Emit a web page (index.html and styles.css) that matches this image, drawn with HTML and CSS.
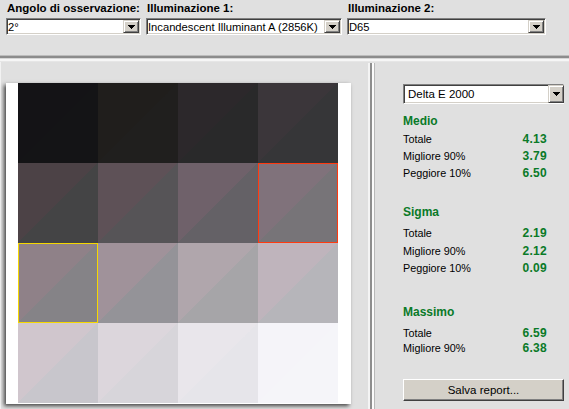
FILE: index.html
```html
<!DOCTYPE html>
<html>
  <head>
    <meta charset="utf-8" />
    <meta name="viewport" content="width=device-width, initial-scale=1" />
    <link rel="stylesheet" href="styles.css">
  </head>
  <body>
    <div class="top-bar">
      <div class="field field-angle">
        <label>Angolo di osservazione:</label>
        <div class="combo">
          <span>2°</span>
          <i class="combo-btn"><svg width="7" height="4" viewBox="0 0 7 4"><path d="M0 0h7v1H0zM1 1h5v1H1zM2 2h3v1H2zM3 3h1v1H3z"/></svg></i>
        </div>
      </div>
      <div class="field field-ill1">
        <label>Illuminazione 1:</label>
        <div class="combo">
          <span>Incandescent Illuminant A (2856K)</span>
          <i class="combo-btn"><svg width="7" height="4" viewBox="0 0 7 4"><path d="M0 0h7v1H0zM1 1h5v1H1zM2 2h3v1H2zM3 3h1v1H3z"/></svg></i>
        </div>
      </div>
      <div class="field field-ill2">
        <label>Illuminazione 2:</label>
        <div class="combo">
          <span>D65</span>
          <i class="combo-btn"><svg width="7" height="4" viewBox="0 0 7 4"><path d="M0 0h7v1H0zM1 1h5v1H1zM2 2h3v1H2zM3 3h1v1H3z"/></svg></i>
        </div>
      </div>
    </div>

    <div class="h-split"></div>

    <main>
      <div class="preview">
        <div class="paper">
          <div class="patches">
            <div class="patch" style="--a:#141316;--b:#141416"></div>
            <div class="patch" style="--a:#201e1c;--b:#201f1e"></div>
            <div class="patch" style="--a:#2c282b;--b:#29292a"></div>
            <div class="patch" style="--a:#3b363a;--b:#363638"></div>

            <div class="patch" style="--a:#4c4246;--b:#444445"></div>
            <div class="patch" style="--a:#5e5157;--b:#565457"></div>
            <div class="patch" style="--a:#6f616a;--b:#646166"></div>
            <div class="patch patch-worst" style="--a:#80727b;--b:#777478"></div>

            <div class="patch patch-best" style="--a:#8f8188;--b:#858387"></div>
            <div class="patch" style="--a:#a0929a;--b:#949398"></div>
            <div class="patch" style="--a:#b0a6ac;--b:#a6a5a8"></div>
            <div class="patch" style="--a:#bfb4bc;--b:#b6b5ba"></div>

            <div class="patch" style="--a:#d0c6cd;--b:#c8c6cc"></div>
            <div class="patch" style="--a:#dcd6dc;--b:#d7d5da"></div>
            <div class="patch" style="--a:#e9e6eb;--b:#e6e5ea"></div>
            <div class="patch" style="--a:#f5f4f9;--b:#f5f5f9"></div>
          </div>
        </div>
      </div>

      <div class="v-split"></div>

      <aside class="stats">
        <div class="combo combo-metric">
          <span>Delta E 2000</span>
          <i class="combo-btn"><svg width="7" height="4" viewBox="0 0 7 4"><path d="M0 0h7v1H0zM1 1h5v1H1zM2 2h3v1H2zM3 3h1v1H3z"/></svg></i>
        </div>

        <section class="group group-medio">
          <h3>Medio</h3>
          <div class="row"><span>Totale</span><b>4.13</b></div>
          <div class="row"><span>Migliore 90%</span><b>3.79</b></div>
          <div class="row"><span>Peggiore 10%</span><b>6.50</b></div>
        </section>

        <section class="group group-sigma">
          <h3>Sigma</h3>
          <div class="row"><span>Totale</span><b>2.19</b></div>
          <div class="row"><span>Migliore 90%</span><b>2.12</b></div>
          <div class="row"><span>Peggiore 10%</span><b>0.09</b></div>
        </section>

        <section class="group group-max">
          <h3>Massimo</h3>
          <div class="row"><span>Totale</span><b>6.59</b></div>
          <div class="row"><span>Migliore 90%</span><b>6.38</b></div>
        </section>

        <button class="save">Salva report...</button>
      </aside>
    </main>
  </body>
</html>
```

FILE: styles.css
```css
* {
  box-sizing: border-box;
}

body {
  margin: 0;
  width: 569px;
  height: 409px;
  overflow: hidden;
  background: #e0e0e0;
  font-family: "Liberation Sans", Arial, sans-serif;
  font-size: 11px;
  color: #000;
}

/* top options bar */

.top-bar {
  display: flex;
  gap: 5px;
  height: 55px;
  padding: 1px 0 0 6px;
}

.field label {
  display: block;
  font-weight: bold;
  font-size: 11.5px;
  white-space: nowrap;
  line-height: 14px;
  padding-left: 1px;
  margin-bottom: 3px;
}

.field-angle {
  width: 135px;
}

.field-ill1 {
  width: 196px;
}

.field-ill2 {
  width: 199px;
}

.combo {
  display: flex;
  align-items: center;
  height: 17px;
  padding: 0 1px 0 1px;
  font-size: 11.2px;
  background: #fff;
  border: 1px solid;
  border-color: #808080 #fff #fff #808080;
  box-shadow: inset 1px 1px 0 #404040, inset -1px -1px 0 #d4d0c8;
}

.combo span {
  flex: 1;
  white-space: nowrap;
  overflow: hidden;
}

.combo-btn {
  display: flex;
  align-items: center;
  justify-content: center;
  width: 16px;
  height: 13px;
  background: #d4d0c8;
  border: 1px solid;
  border-color: #d4d0c8 #404040 #404040 #d4d0c8;
  box-shadow: inset 1px 1px 0 #fff, inset -1px -1px 0 #808080;
}

.combo-btn svg {
  display: block;
}

/* splitters */

.h-split {
  height: 7px;
  background: linear-gradient(#bcbcbc 0 1px, #8c8c8c 1px 3px, #d6d6d6 3px 4px, #f6f6f6 4px 6px, #e6e6e6 6px);
}

main {
  display: flex;
  height: 347px;
}

.v-split {
  width: 8px;
  margin-top: 1px;
  background: linear-gradient(to right, #f4f4f4 0 2px, #8e8e8e 2px 4px, #fbfbfb 4px 6px, #b8b8b8 6px 7px, #e0e0e0 7px);
}

/* preview with the patches */

.preview {
  width: 368px;
  padding: 21px 0 0 6px;
  border-left: 1px solid #f2f2f2;
}

.paper {
  width: 345px;
  height: 321px;
  margin-left: -1px;
  padding-left: 12px;
  background: #fff;
  box-shadow: -2px 2px 4px rgba(0, 0, 0, 0.7);
}

.patches {
  display: grid;
  grid-template-columns: repeat(4, 80px);
  grid-template-rows: repeat(4, 80px);
}

.patch {
  background: linear-gradient(to bottom right, var(--a) 50%, var(--b) 50%);
}

.patch-worst {
  outline: 1px solid #ff3a10;
  outline-offset: -1px;
}

.patch-best {
  outline: 1px solid #f5d800;
  outline-offset: -1px;
}

/* stats column */

.stats {
  flex: 1;
  display: flex;
  flex-direction: column;
  align-items: flex-start;
  padding: 22px 0 0 27px;
}

.combo-metric {
  width: 161px;
  height: 20px;
  padding: 0 0 0 4px;
  font-size: 11.5px;
}

.combo-metric .combo-btn {
  height: 18px;
  margin-right: -1px;
}

.group h3 {
  margin: 0;
  font-size: 12px;
  line-height: 17px;
  color: #0a7a28;
}

.row {
  display: flex;
  justify-content: space-between;
  width: 144px;
  line-height: 17px;
  font-size: 10.8px;
}

.row b {
  font-size: 12px;
  letter-spacing: 0.3px;
  color: #0a7a28;
}

.group-medio {
  margin-top: 9px;
}

.group-medio h3 {
  margin-bottom: 1px;
}

.group-sigma {
  margin-top: 22px;
}

.group-sigma h3 {
  margin-bottom: 4px;
}

.group-sigma .row:nth-of-type(2) {
  margin-top: 1px;
}

.group-max {
  margin-top: 27px;
}

.group-max h3 {
  margin-bottom: 4px;
}

.group-max .row + .row {
  margin-top: -2px;
}

.save {
  margin-top: 22px;
  width: 161px;
  height: 22px;
  padding: 0;
  font-family: inherit;
  font-size: 11.5px;
  color: #000;
  background: #d4d0c8;
  border: 1px solid;
  border-color: #fff #404040 #404040 #fff;
  box-shadow: inset -1px -1px 0 #808080;
}
```
